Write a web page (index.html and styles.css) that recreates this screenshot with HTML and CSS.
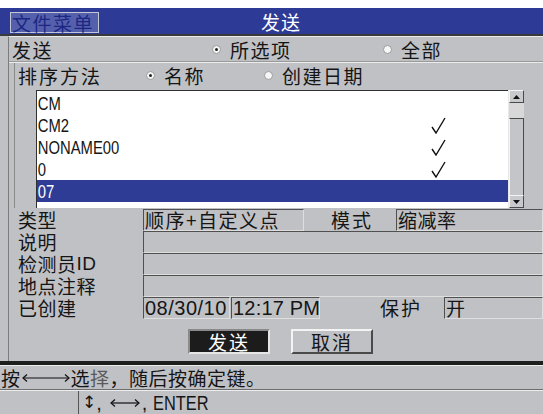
FILE: index.html
```html
<!DOCTYPE html>
<html lang="zh-CN">
<head>
    <meta charset="UTF-8">
    <title>发送</title>
    <link rel="stylesheet" href="styles.css">
</head>
<body>
    <div class="top-strip"></div>

    <!-- Title bar -->
    <div class="titlebar">
        <div class="menu-btn">文件菜单</div>
        <div class="title">发送</div>
    </div>
    <div class="title-rule"></div>

    <div class="main">
        <!-- Send scope -->
        <div class="row row-send">
            <div class="cell-label send-label">发送</div>
            <div class="option opt-selected-send"><span class="radio on"></span>所选项</div>
            <div class="option"><span class="radio"></span>全部</div>
        </div>
        <div class="sep"></div>

        <div class="sort-group">
            <div class="row row-sort">
                <div class="cell-label sort-label">排序方法</div>
                <div class="option opt-name"><span class="radio on"></span>名称</div>
                <div class="option"><span class="radio"></span>创建日期</div>
            </div>

            <!-- File list -->
            <div class="list-wrap">
                <div class="list">
                    <div class="item"><span class="name narrow">CM</span></div>
                    <div class="item"><span class="name narrow">CM2</span><svg class="check" width="15" height="17" viewBox="0 0 15 17"><polyline points="1,10 5,16 14,1" fill="none" stroke="#111" stroke-width="1.4"/></svg></div>
                    <div class="item"><span class="name narrow">NONAME00</span><svg class="check" width="15" height="17" viewBox="0 0 15 17"><polyline points="1,10 5,16 14,1" fill="none" stroke="#111" stroke-width="1.4"/></svg></div>
                    <div class="item"><span class="name narrow">0</span><svg class="check" width="15" height="17" viewBox="0 0 15 17"><polyline points="1,10 5,16 14,1" fill="none" stroke="#111" stroke-width="1.4"/></svg></div>
                    <div class="item selected"><span class="name narrow">07</span></div>
                </div>
                <div class="scrollbar">
                    <div class="sb-btn"><svg width="7" height="4" viewBox="0 0 7 4"><polygon points="0,4 7,4 3.5,0" fill="#111"/></svg></div>
                    <div class="sb-thumb"></div>
                    <div class="sb-track"></div>
                    <div class="sb-btn"><svg width="7" height="4" viewBox="0 0 7 4"><polygon points="0,0 7,0 3.5,4" fill="#111"/></svg></div>
                </div>
            </div>
        </div>

        <!-- File details -->
        <div class="fields">
            <div class="frow">
                <div class="flabel">类型</div>
                <div class="field f-type">顺序+自定义点</div>
                <div class="flabel2 f-mode-label">模式</div>
                <div class="field grow">缩减率</div>
            </div>
            <div class="frow">
                <div class="flabel">说明</div>
                <div class="field grow"></div>
            </div>
            <div class="frow">
                <div class="flabel">检测员<span class="latin">ID</span></div>
                <div class="field grow"></div>
            </div>
            <div class="frow">
                <div class="flabel">地点注释</div>
                <div class="field grow"></div>
            </div>
            <div class="frow">
                <div class="flabel">已创建</div>
                <div class="field f-date latin">08/30/10</div>
                <div class="field f-time latin">12:17 PM</div>
                <div class="flabel2 f-protect-label">保护</div>
                <div class="field grow">开</div>
            </div>
        </div>

        <div class="buttons">
            <div class="btn btn-active">发送</div>
            <div class="btn">取消</div>
        </div>
    </div>

    <div class="rule-thick"></div>

    <!-- Help line -->
    <div class="status">按<svg class="arrow-long" width="48" height="10" viewBox="0 0 48 10"><line x1="1" y1="5" x2="47" y2="5" stroke="#111" stroke-width="1.2"/><polyline points="5,1.5 1,5 5,8.5" fill="none" stroke="#111" stroke-width="1.2"/><polyline points="43,1.5 47,5 43,8.5" fill="none" stroke="#111" stroke-width="1.2"/></svg>选<span class="dim">择</span>，随后按确定键。</div>
    <div class="rule"></div>

    <div class="keys">
        <div class="keys-left"></div>
        <div class="keys-text"><span class="updown">↕</span><span class="latin comma">,</span><svg class="arrow-short" width="30" height="10" viewBox="0 0 30 10"><line x1="1" y1="5" x2="29" y2="5" stroke="#111" stroke-width="1.2"/><polyline points="5,1.5 1,5 5,8.5" fill="none" stroke="#111" stroke-width="1.2"/><polyline points="25,1.5 29,5 25,8.5" fill="none" stroke="#111" stroke-width="1.2"/></svg><span class="latin comma">,</span><span class="narrow enter">ENTER</span></div>
    </div>
</body>
</html>
```

FILE: styles.css
```css
body {
    margin: 0;
    width: 543px;
    height: 414px;
    overflow: hidden;
    background-color: #c0c1c5;
    color: #151515;
    font-family: "Noto Sans CJK SC", sans-serif;
    font-size: 19px;
    line-height: 1;
}
.latin {
    font-family: "Liberation Sans", "Noto Sans CJK SC", sans-serif;
}
.narrow {
    display: inline-block;
    font-family: "Liberation Sans", sans-serif;
    transform: scaleX(0.78);
    transform-origin: left center;
}
.top-strip {
    height: 8px;
    background-color: #fff;
}
.titlebar {
    height: 26px;
    background-color: #2d3a96;
    display: flex;
    align-items: center;
}
.menu-btn {
    margin-left: 10px;
    margin-top: 2px;
    width: 86px;
    height: 19px;
    border: 1px solid #c4c6d6;
    background-color: #5560ac;
    color: #1c2784;
    letter-spacing: 1.5px;
    padding-left: 1px;
    line-height: 19px;
}
.title {
    margin-left: 162px;
    color: #fff;
    letter-spacing: 1px;
}
.title-rule {
    height: 2px;
    background-color: #3a3a3a;
}
.main {
    margin-left: 8px;
    height: 325px;
    border-left: 1px solid #7c7c7c;
    border-top: 1px solid #ececec;
    box-sizing: border-box;
}
.row {
    display: flex;
    align-items: center;
    letter-spacing: 1.5px;
}
.row-send {
    height: 24px;
}
.send-label {
    width: 200px;
    padding-left: 3px;
}
.opt-selected-send {
    width: 171px;
}
.option {
    display: flex;
    align-items: center;
}
.radio {
    width: 7px;
    height: 7px;
    border-radius: 50%;
    border: 1px solid #9a9a9a;
    background-color: #f6f6f6;
    margin-right: 9px;
    display: flex;
    align-items: center;
    justify-content: center;
}
.radio.on::after {
    content: "";
    width: 3px;
    height: 3px;
    border-radius: 50%;
    background-color: #222;
}
.sep {
    height: 1px;
    background-color: #ececec;
    border-top: 1px solid #9a9a9a;
}
.sort-group {
    margin-left: 5px;
    border-left: 1px solid #8a8a8a;
    height: 145px;
}
.row-sort {
    height: 24px;
}
.sort-label {
    width: 128px;
    padding-left: 3px;
    letter-spacing: 2px;
}
.opt-name {
    width: 118px;
}
.list-wrap {
    display: flex;
    margin-left: 21px;
    margin-top: 3px;
    height: 118px;
}
.list {
    width: 471px;
    background-color: #fff;
    border-top: 1px solid #303030;
    border-left: 1px solid #303030;
    padding-top: 1px;
}
.item {
    height: 22px;
    display: flex;
    align-items: center;
    position: relative;
    font-size: 19px;
}
.item .name {
    padding-left: 1px;
}
.item.selected {
    background-color: #2f3c96;
    color: #fff;
}
.check {
    position: absolute;
    left: 394px;
    top: 3px;
}
.scrollbar {
    width: 15px;
    display: flex;
    flex-direction: column;
    border-left: 1px solid #e8e8e8;
}
.sb-btn {
    height: 11px;
    background-color: #c8c9cc;
    border-top: 1px solid #f4f4f4;
    border-left: 1px solid #f4f4f4;
    border-right: 1px solid #4a4a4a;
    border-bottom: 1px solid #4a4a4a;
    display: flex;
    align-items: center;
    justify-content: center;
}
.sb-thumb {
    height: 15px;
    background-color: #d8d8d8;
    background-image: radial-gradient(#b8b8b8 0.6px, transparent 0.7px);
    background-size: 2px 2px;
}
.sb-track {
    flex: 1;
    background-color: #c4c5c8;
    border-top: 1px solid #4a4a4a;
    border-left: 1px solid #f4f4f4;
    border-right: 1px solid #4a4a4a;
}
.fields {
    margin-top: 1px;
}
.frow {
    display: flex;
    height: 22px;
    align-items: stretch;
}
.flabel {
    width: 125px;
    padding-left: 9px;
    display: flex;
    align-items: center;
    letter-spacing: 0.5px;
    line-height: 20px;
}
.flabel2 {
    display: flex;
    align-items: center;
    letter-spacing: 2px;
    line-height: 20px;
}
.field {
    box-sizing: border-box;
    height: 22px;
    border-top: 1px solid #505050;
    border-left: 1px solid #505050;
    border-bottom: 1px solid #dedede;
    border-right: 1px solid #dedede;
    padding-left: 1px;
    display: flex;
    align-items: center;
    white-space: nowrap;
    letter-spacing: 0.5px;
    line-height: 20px;
}
.grow {
    flex: 1;
}
.f-type {
    width: 161px;
    letter-spacing: 1.5px;
}
.f-mode-label {
    width: 92px;
    padding-left: 27px;
    box-sizing: border-box;
}
.f-date {
    width: 87px;
    font-size: 20px;
    letter-spacing: 0.5px;
}
.f-time {
    width: 89px;
    margin-left: 1px;
    font-size: 20px;
    letter-spacing: 0.2px;
}
.f-protect-label {
    width: 124px;
    padding-left: 60px;
    box-sizing: border-box;
}
.buttons {
    display: flex;
    margin-top: 10px;
    margin-left: 179px;
    gap: 21px;
}
.btn {
    box-sizing: border-box;
    width: 82px;
    height: 25px;
    display: flex;
    align-items: center;
    justify-content: center;
    letter-spacing: 2px;
    border-top: 2px solid #f4f4f4;
    border-left: 2px solid #f4f4f4;
    border-right: 2px solid #4a4a4a;
    border-bottom: 2px solid #4a4a4a;
}
.btn-active {
    background-color: #1c1c1c;
    color: #fff;
    border-top-color: #8a8a8a;
    border-left-color: #8a8a8a;
    border-right-color: #e6e6e6;
    border-bottom-color: #e6e6e6;
}
.rule-thick {
    height: 4px;
    background-color: #1e1e1e;
    border-bottom: 1px solid #ececec;
}
.status {
    height: 23px;
    display: flex;
    align-items: center;
    padding-left: 1px;
    letter-spacing: 0.5px;
}
.arrow-long {
    margin: 0 1px;
}
.dim {
    color: #5a5a5a;
}
.rule {
    height: 1px;
    background-color: #6e6e6e;
    border-bottom: 1px solid #ececec;
}
.keys {
    display: flex;
    height: 23px;
}
.keys-left {
    width: 78px;
    border-right: 1px solid #555;
}
.keys-text {
    display: flex;
    align-items: center;
    padding-left: 3px;
}
.updown {
    font-family: "DejaVu Sans", sans-serif;
    font-size: 17px;
}
.comma {
    font-size: 20px;
}
.arrow-short {
    margin: 0 2px 0 8px;
}
.enter {
    font-size: 21px;
    margin-left: 6px;
}
```
